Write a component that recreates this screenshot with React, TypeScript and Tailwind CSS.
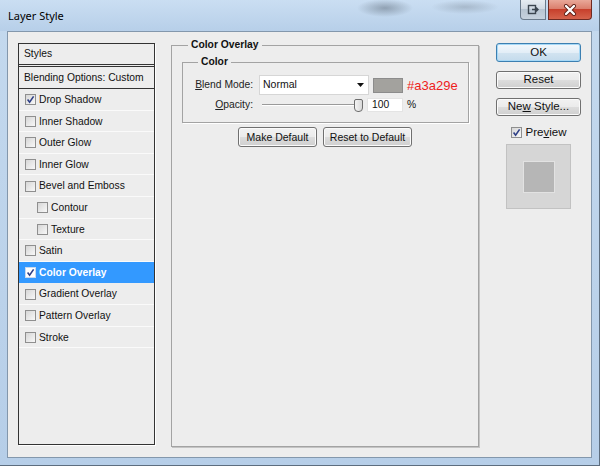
import React from 'react'

type Item = { label: string; checked?: boolean; indent?: boolean; active?: boolean }

const items: Item[] = [
  { label: 'Drop Shadow', checked: true },
  { label: 'Inner Shadow' },
  { label: 'Outer Glow' },
  { label: 'Inner Glow' },
  { label: 'Bevel and Emboss' },
  { label: 'Contour', indent: true },
  { label: 'Texture', indent: true },
  { label: 'Satin' },
  { label: 'Color Overlay', checked: true, active: true },
  { label: 'Gradient Overlay' },
  { label: 'Pattern Overlay' },
  { label: 'Stroke' },
]

function Check({ checked = false, light = false }: { checked?: boolean; light?: boolean }) {
  return (
    <span
      className={`flex h-[11px] w-[11px] shrink-0 items-center justify-center border ${
        light ? 'border-[#c9d9ee] bg-white' : 'border-[#8f8f8f] bg-[linear-gradient(135deg,#d6d6d6,#f8f8f8)]'
      }`}
    >
      {checked && (
        <svg width="9" height="9" viewBox="0 0 9 9">
          <path d="M1.6 4.6 L3.6 7.2 L7.6 1.4" fill="none" stroke="#2e3f86" strokeWidth="1.6" />
        </svg>
      )}
    </span>
  )
}

function Btn({
  children,
  w,
  h = 'h-[20px]',
  size = 'text-[11.5px]',
  primary = false,
}: {
  children: React.ReactNode
  w: string
  h?: string
  size?: string
  primary?: boolean
}) {
  return (
    <div
      className={`${w} ${h} ${size} flex items-center justify-center rounded-[3px] border leading-none text-[#111] ${
        primary
          ? 'border-[#3c7fb1] bg-[linear-gradient(#f3f8fc_0%,#e3eef7_50%,#d3e4f1_50%,#c4dbec_100%)] shadow-[inset_0_0_0_1px_#a6d8f6]'
          : 'border-[#707070] bg-[linear-gradient(#f2f2f2_0%,#ebebeb_50%,#dddddd_50%,#cfcfcf_100%)] shadow-[inset_0_0_0_1px_#fbfbfb]'
      }`}
    >
      <span>{children}</span>
    </div>
  )
}

export default function App() {
  return (
    <div className="flex h-[466px] w-[600px] flex-col overflow-hidden border-r border-b border-[#5d6d7e] bg-[linear-gradient(#c4d9ee,#b6cee8)] font-['Liberation_Sans',Arial,sans-serif] text-[10.3px] text-[#111]">
      {/* title bar */}
      <div className="flex h-[31px] shrink-0 items-start justify-between bg-[radial-gradient(ellipse_28px_9px_at_385px_8px,rgba(80,92,105,0.45),transparent),radial-gradient(ellipse_34px_7px_at_465px_7px,rgba(110,122,135,0.35),transparent),linear-gradient(#cadef2,#b7cfe9)]">
        <span className="mt-[9px] ml-[8px] font-['Noto_Sans',sans-serif] text-[11px] leading-[14px] text-black">Layer Style</span>
        <div className="mr-[7px] flex">
          <div className="flex h-[20px] w-[26px] items-center justify-center rounded-bl-[4px] border border-t-0 border-[#6b7b8c] bg-[linear-gradient(#e6ecf2_0%,#cfd8e2_50%,#b8c5d2_50%,#c6d2de_100%)]">
            <svg width="12" height="11" viewBox="0 0 12 11">
              <rect x="1.5" y="1.5" width="7" height="8" fill="none" stroke="#3c4650" strokeWidth="1.4" />
              <path d="M5 5.5 H11 M9 3.5 L11 5.5 L9 7.5" fill="none" stroke="#3c4650" strokeWidth="1.4" />
            </svg>
          </div>
          <div className="ml-[2px] flex h-[20px] w-[44px] items-center justify-center rounded-br-[4px] border border-t-0 border-[#6f2a22] bg-[linear-gradient(#e9a899_0%,#d97b69_50%,#c7402c_50%,#d5634c_100%)]">
            <svg width="14" height="12" viewBox="0 0 14 12">
              <path d="M3 2 L11 10 M11 2 L3 10" stroke="#5b1d14" strokeWidth="4" strokeLinecap="round" />
              <path d="M3 2 L11 10 M11 2 L3 10" stroke="#fff" strokeWidth="2.4" strokeLinecap="round" />
            </svg>
          </div>
        </div>
      </div>

      {/* content */}
      <div className="mx-[7px] h-[427px] shrink-0 border border-[#8397ac] bg-[#ededed] pt-[6px] pl-[10px]">
        <div className="flex items-start">
          {/* left list */}
          <div className="mt-[5px] h-[402px] w-[137px] shrink-0 border border-[#333] shadow-[1px_1px_0_#fff]">
            <div className="flex h-[23px] items-center border-b-[3px] border-double border-[#333] pl-[5px]">Styles</div>
            <div className="flex h-[22px] items-center border-b border-[#333] pl-[5px]">Blending Options: Custom</div>
            {items.map((it) => (
              <div
                key={it.label}
                className={`flex h-[21.6px] items-center gap-[2px] border-b pt-[1px] ${
                  it.active ? 'border-[#3399ff] bg-[#3399ff] font-bold text-white' : 'border-[#fafafa]'
                } ${it.indent ? 'pl-[18px]' : 'pl-[6px]'}`}
              >
                <Check checked={it.checked} light={it.active} />
                <span className="ml-[1px]">{it.label}</span>
              </div>
            ))}
          </div>

          {/* middle panel */}
          <fieldset className="ml-[16px] h-[409px] w-[308px] shrink-0 border border-[#a3a3a3] shadow-[1px_1px_0_#c4c4c4]">
            <legend className="ml-[16px] px-[3px] font-bold leading-[14px]">Color Overlay</legend>
            <fieldset className="mt-[3px] ml-[10px] w-[287px] border border-[#a3a3a3] pb-[10px] shadow-[1px_1px_0_#fff]">
              <legend className="ml-[15px] px-[3px] font-bold leading-[14px]">Color</legend>
              <div className="mt-[6px] flex h-[20px] items-center gap-[6px]">
                <span className="w-[70px] text-right text-[#222]">
                  <span className="underline">B</span>lend Mode:
                </span>
                <div className="flex h-[20px] w-[110px] items-center justify-between border border-[#d6d6d6] bg-white pr-[4px] pl-[3px]">
                  <span className="text-[10.5px]">Normal</span>
                  <svg width="7" height="4" viewBox="0 0 7 4">
                    <path d="M0 0 H7 L3.5 4 Z" fill="#111" />
                  </svg>
                </div>
                <div className="-ml-[2px] h-[15px] w-[30px] border border-[#8c8c8c] bg-[#a3a29e]" />
                <span className="-ml-[2px] text-[13px] leading-none text-[#ee1c1c]">#a3a29e</span>
              </div>
              <div className="mt-[3px] flex h-[14px] items-center gap-[6px]">
                <span className="w-[70px] text-right text-[#222]">
                  <span className="underline">O</span>pacity:
                </span>
                <div className="relative h-[14px] w-[104px]">
                  <div className="mt-[6px] ml-[3px] h-[2px] w-[95px] border-t border-[#9a9a9a] border-b border-b-white" />
                  <div className="absolute top-[1px] left-[95px] h-[13px] w-[9px] rounded-b-[4px] rounded-t-[2px] border border-[#6e6e6e] bg-[linear-gradient(90deg,#f4f4f4,#d9d9d9)]" />
                </div>
                <div className="-ml-[2px] flex h-[14px] w-[36px] items-center bg-white pl-[5px] shadow-[inset_0_0_0_1px_#e4e4e4]">100</div>
                <span className="-ml-[2px]">%</span>
              </div>
            </fieldset>
            <div className="mt-[4px] flex justify-center gap-[6px]">
              <Btn w="w-[79px]" size="text-[10.5px]">
                Make Default
              </Btn>
              <Btn w="w-[89px]" size="text-[10.5px]">
                Reset to Default
              </Btn>
            </div>
          </fieldset>

          {/* right column */}
          <div className="mt-[5px] ml-[17px] flex w-[85px] shrink-0 flex-col items-center">
            <Btn w="w-[85px]" h="h-[19px]" primary>
              OK
            </Btn>
            <div className="mt-[9px]">
              <Btn w="w-[85px]" h="h-[18px]">
                Reset
              </Btn>
            </div>
            <div className="mt-[9px]">
              <Btn w="w-[85px]" h="h-[18px]">
                Ne<span className="underline">w</span> Style...
              </Btn>
            </div>
            <div className="mt-[11px] flex h-[11px] items-center gap-[4px] text-[11.5px]">
              <Check checked />
              <span>
                Pre<span className="underline">v</span>iew
              </span>
            </div>
            <div className="mt-[6px] flex h-[65px] w-[65px] items-center justify-center border border-[#c2c2c2] bg-[#d6d6d6]">
              <div className="h-[32px] w-[32px] border border-[#e2e2e2] bg-[#b6b6b6]" />
            </div>
          </div>
        </div>
      </div>
    </div>
  )
}
